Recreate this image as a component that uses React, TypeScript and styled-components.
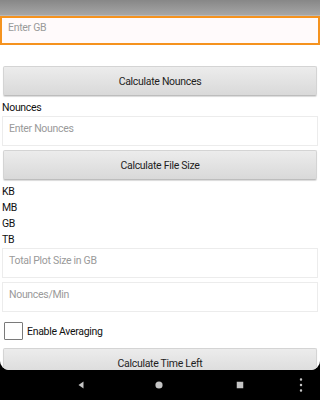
import React from 'react';
import styled, { createGlobalStyle } from 'styled-components';

const GlobalStyle = createGlobalStyle`
  html, body {
    margin: 0;
    padding: 0;
    background: #000;
    overflow: hidden;
  }
  body {
    font-family: Roboto, "Noto Sans", Arial, sans-serif;
    letter-spacing: -0.3px;
  }
`;

const Screen = styled.div`
  width: 100vw;
  height: 100vh;
  display: flex;
  flex-direction: column;
  background: #000;
`;

const Content = styled.div`
  height: 370px;
  background: #fff;
  border-radius: 0 0 9px 9px;
  overflow: hidden;
  display: flex;
  flex-direction: column;
`;

const TopBar = styled.div`
  height: 16px;
  flex-shrink: 0;
  background: linear-gradient(#878787, #a6a6a6);
  border-bottom: 1px solid #b8b8b8;
  box-sizing: border-box;
`;

const Field = styled.div<{ $focused?: boolean; $inset?: number }>`
  height: ${p => (p.$focused ? 29 : 30)}px;
  margin: 0 ${p => p.$inset ?? 2}px;
  box-sizing: border-box;
  border: ${p => (p.$focused ? '2px solid #f5921e' : '1px solid #ececec')};
  background: ${p => (p.$focused ? '#fffafb' : '#fff')};
  padding: ${p => (p.$focused ? '3px 0 0 6px' : '5px 0 0 6px')};
  font-size: 10.5px;
  color: #9a9a9a;
  flex-shrink: 0;
`;

const Spacer = styled.div<{ $h: number }>`
  height: ${p => p.$h}px;
  flex-shrink: 0;
`;

const Button = styled.div`
  height: 30px;
  margin: 0 3px;
  flex-shrink: 0;
  box-sizing: border-box;
  border: 1px solid #d4d4d4;
  border-bottom-color: #bdbdbd;
  border-radius: 2px;
  background: linear-gradient(#ececec, #d9d9d9);
  box-shadow: 0 1px 1px rgba(0, 0, 0, 0.15);
  display: flex;
  align-items: center;
  justify-content: center;
  font-size: 10.5px;
  color: #1e1e1e;
`;

const Label = styled.div`
  height: 16px;
  line-height: 16px;
  padding-left: 2px;
  font-size: 10.5px;
  color: #111;
  flex-shrink: 0;
`;

const CheckRow = styled.div`
  height: 28px;
  display: flex;
  align-items: center;
  gap: 4px;
  padding-left: 4px;
  flex-shrink: 0;
  font-size: 10.5px;
  color: #111;
`;

const Box = styled.div`
  width: 19px;
  height: 18px;
  box-sizing: border-box;
  border: 1.5px solid #7a7a7a;
  border-radius: 1px;
`;

const NavBar = styled.div`
  height: 30px;
  position: relative;
`;

const NavSlot = styled.div<{ $x: number }>`
  position: absolute;
  left: ${p => p.$x}%;
  top: 15px;
  transform: translate(-50%, -50%);
  display: flex;
`;

const App = () => (
  <>
    <GlobalStyle />
    <Screen>
      <Content>
        <TopBar />
        <Field $focused $inset={0}>Enter GB</Field>
        <Spacer $h={21} />
        <Button>Calculate Nounces</Button>
        <Spacer $h={4} />
        <Label>Nounces</Label>
        <Field>Enter Nounces</Field>
        <Spacer $h={4} />
        <Button>Calculate File Size</Button>
        <Spacer $h={4} />
        <Label>KB</Label>
        <Label>MB</Label>
        <Label>GB</Label>
        <Label>TB</Label>
        <Field>Total Plot Size in GB</Field>
        <Spacer $h={4} />
        <Field>Nounces/Min</Field>
        <Spacer $h={5} />
        <CheckRow>
          <Box />
          Enable Averaging
        </CheckRow>
        <Spacer $h={3} />
        <Button>Calculate Time Left</Button>
      </Content>
      <NavBar>
        <NavSlot $x={25.3}>
          <svg width="6" height="8" viewBox="0 0 6 8">
            <path d="M5.5 0.5 L0.5 4 L5.5 7.5 Z" fill="#c4c4c4" />
          </svg>
        </NavSlot>
        <NavSlot $x={49.8}>
          <svg width="8" height="8" viewBox="0 0 8 8">
            <circle cx="4" cy="4" r="3.6" fill="#c4c4c4" />
          </svg>
        </NavSlot>
        <NavSlot $x={75}>
          <svg width="7" height="7" viewBox="0 0 7 7">
            <rect x="0" y="0" width="7" height="7" fill="#c4c4c4" />
          </svg>
        </NavSlot>
        <NavSlot $x={94.2}>
          <svg width="3" height="14" viewBox="0 0 3 14">
            <circle cx="1.5" cy="1.5" r="1.3" fill="#c4c4c4" />
            <circle cx="1.5" cy="7" r="1.3" fill="#c4c4c4" />
            <circle cx="1.5" cy="12.5" r="1.3" fill="#c4c4c4" />
          </svg>
        </NavSlot>
      </NavBar>
    </Screen>
  </>
);

export default App;
